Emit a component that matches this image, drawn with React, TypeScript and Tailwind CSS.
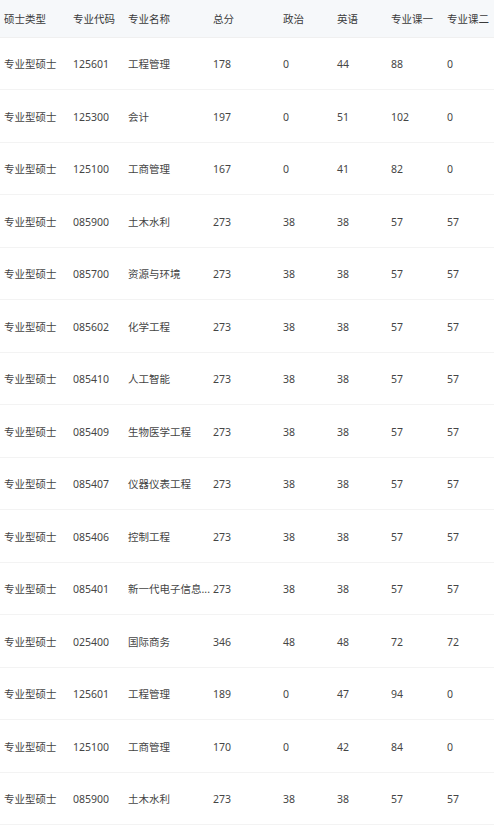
import React from "react";

type Row = [string, string, string, string, string, string, string, string];

const rows: Row[] = [
  ["专业型硕士", "125601", "工程管理", "178", "0", "44", "88", "0"],
  ["专业型硕士", "125300", "会计", "197", "0", "51", "102", "0"],
  ["专业型硕士", "125100", "工商管理", "167", "0", "41", "82", "0"],
  ["专业型硕士", "085900", "土木水利", "273", "38", "38", "57", "57"],
  ["专业型硕士", "085700", "资源与环境", "273", "38", "38", "57", "57"],
  ["专业型硕士", "085602", "化学工程", "273", "38", "38", "57", "57"],
  ["专业型硕士", "085410", "人工智能", "273", "38", "38", "57", "57"],
  ["专业型硕士", "085409", "生物医学工程", "273", "38", "38", "57", "57"],
  ["专业型硕士", "085407", "仪器仪表工程", "273", "38", "38", "57", "57"],
  ["专业型硕士", "085406", "控制工程", "273", "38", "38", "57", "57"],
  ["专业型硕士", "085401", "新一代电子信息...", "273", "38", "38", "57", "57"],
  ["专业型硕士", "025400", "国际商务", "346", "48", "48", "72", "72"],
  ["专业型硕士", "125601", "工程管理", "189", "0", "47", "94", "0"],
  ["专业型硕士", "125100", "工商管理", "170", "0", "42", "84", "0"],
  ["专业型硕士", "085900", "土木水利", "273", "38", "38", "57", "57"],
];

const headers = ["硕士类型", "专业代码", "专业名称", "总分", "政治", "英语", "专业课一", "专业课二"];
const widths = ["w-[69px]", "w-[55px]", "w-[85px]", "w-[70px]", "w-[54px]", "w-[54px]", "w-[56px]", "w-[51px]"];

export default function App() {
  return (
    <div className="w-[494px] h-[835px] overflow-hidden bg-white font-['Noto_Sans','Noto_Sans_CJK_SC',sans-serif] text-[10.5px] text-[#454545]">
      <table className="table-fixed w-[494px] border-collapse">
        <colgroup>
          {widths.map((w, i) => (
            <col key={i} className={w} />
          ))}
        </colgroup>
        <thead>
          <tr className="bg-[#f6f8fa] h-[37px] border-b border-[#f0f0f0]">
            {headers.map((h) => (
              <th key={h} className="pl-[4px] pt-[4px] text-left font-normal whitespace-nowrap text-[#3a3a3a]">
                {h}
              </th>
            ))}
          </tr>
        </thead>
        <tbody>
          {rows.map((row, i) => (
            <tr key={i} className="h-[52.5px] border-b border-[#f3f3f3]">
              {row.map((cell, j) => (
                <td key={j} className="pl-[4px] pt-[4px] whitespace-nowrap">
                  {cell}
                </td>
              ))}
            </tr>
          ))}
        </tbody>
      </table>
    </div>
  );
}
